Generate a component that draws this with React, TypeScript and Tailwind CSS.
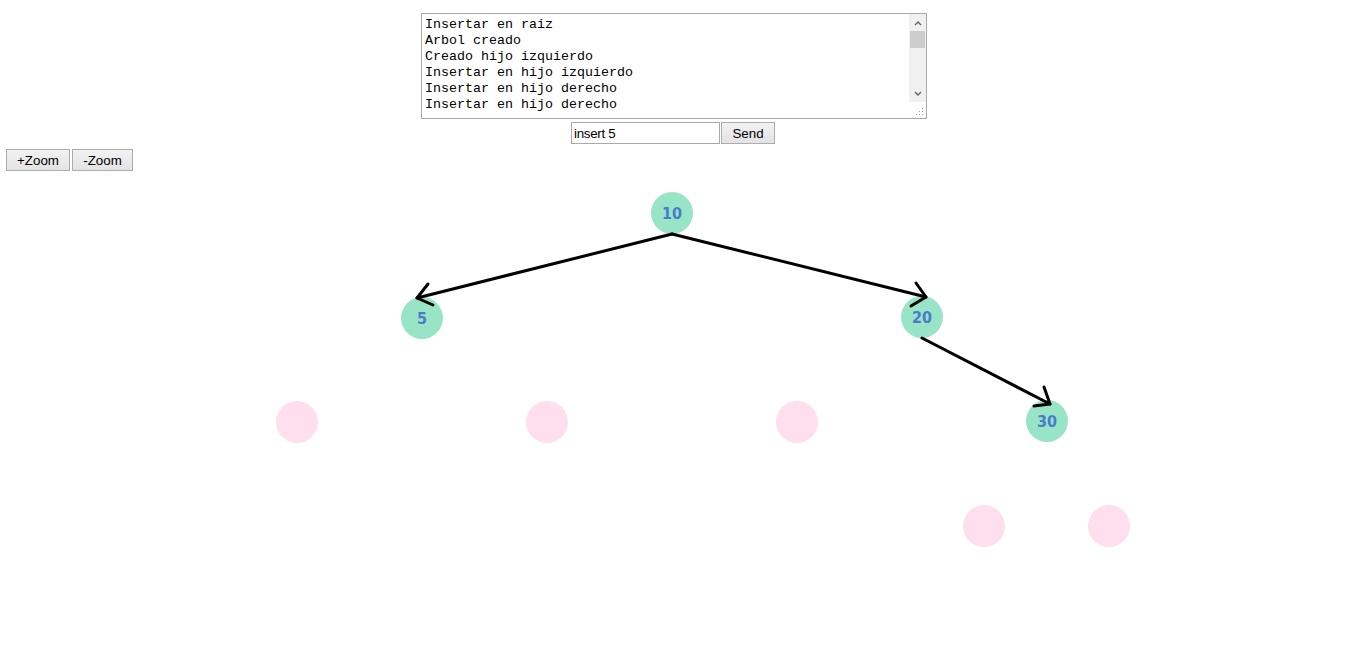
import React from "react";

const logLines = [
  "Insertar en raiz",
  "Arbol creado",
  "Creado hijo izquierdo",
  "Insertar en hijo izquierdo",
  "Insertar en hijo derecho",
  "Insertar en hijo derecho",
];

// tree nodes, page coords with the canvas top at y=171
const TOP = 171;
const nodes = [
  { x: 672, y: 213, label: "10" },
  { x: 422, y: 318, label: "5" },
  { x: 922, y: 317, label: "20" },
  { x: 1047, y: 421, label: "30" },
];
const empties = [
  { x: 297, y: 422 },
  { x: 547, y: 422 },
  { x: 797, y: 422 },
  { x: 984, y: 526 },
  { x: 1109, y: 526 },
];
const edges = [
  { x1: 672, y1: 234, x2: 417, y2: 298, a: [428, 284], b: [433, 305] },
  { x1: 672, y1: 234, x2: 926, y2: 297, a: [916, 283], b: [911, 306] },
  { x1: 922, y1: 338, x2: 1050, y2: 404, a: [1044, 387], b: [1034, 406] },
];

const btn =
  "h-[22px] pt-[2px] border border-[#acacac] bg-gradient-to-b from-[#f2f2f2] to-[#e3e3e3] text-[13.33px] text-black font-['Liberation_Sans',Arial,sans-serif] leading-none";

const App: React.FC = () => {
  return (
    <div className="w-full h-[647px] bg-white overflow-hidden">
      {/* Log box */}
      <div className="flex justify-center pt-[13px] pl-[2px]">
        <div className="relative w-[506px] h-[106px] border border-[#a9a9a9] bg-white">
          <div className="pl-[3px] pt-[3px] font-['Liberation_Mono','Courier_New',monospace] text-[13.33px] leading-[16px] text-black whitespace-pre">
            {logLines.map((l, i) => (
              <div key={i}>{l}</div>
            ))}
          </div>
          {/* scrollbar */}
          <div className="absolute right-0 top-0 w-[17px] h-[88px] bg-[#f0f0f0] flex flex-col items-center">
            <div className="h-[17px] flex items-center justify-center">
              <svg width="8" height="6" viewBox="0 0 8 6">
                <path d="M1 5 L4 2 L7 5" stroke="#606060" strokeWidth="1.3" fill="none" />
              </svg>
            </div>
            <div className="w-[15px] h-[17px] bg-[#cdcdcd]" />
            <div className="flex-1" />
            <div className="h-[17px] flex items-center justify-center">
              <svg width="8" height="6" viewBox="0 0 8 6">
                <path d="M1 1 L4 4 L7 1" stroke="#606060" strokeWidth="1.3" fill="none" />
              </svg>
            </div>
          </div>
          {/* resize grip */}
          <svg className="absolute right-[2px] bottom-[2px]" width="9" height="9" viewBox="0 0 9 9">
            <rect x="7" y="1" width="1" height="1" fill="#a0a0a0" />
            <rect x="4" y="4" width="1" height="1" fill="#a0a0a0" />
            <rect x="7" y="4" width="1" height="1" fill="#a0a0a0" />
            <rect x="1" y="7" width="1" height="1" fill="#a0a0a0" />
            <rect x="4" y="7" width="1" height="1" fill="#a0a0a0" />
            <rect x="7" y="7" width="1" height="1" fill="#a0a0a0" />
          </svg>
        </div>
      </div>

      {/* Command input */}
      <div className="flex justify-center mt-[3px]">
        <input
          type="text"
          defaultValue="insert 5"
          className="w-[149px] h-[22px] border border-[#a9a9a9] px-[2px] pt-[1px] text-[13.33px] text-black font-['Liberation_Sans',Arial,sans-serif] tracking-[-0.3px] outline-none"
        />
        <button className={`${btn} w-[54px] ml-[1px]`}>Send</button>
      </div>

      {/* Zoom buttons */}
      <div className="flex gap-[2px] pl-[6px] mt-[5px]">
        <button className={`${btn} w-[64px]`}>+Zoom</button>
        <button className={`${btn} w-[61px]`}>-Zoom</button>
      </div>

      {/* Tree canvas */}
      <svg width="1346" height="476" viewBox={`0 ${TOP} 1346 476`} className="block">
        {empties.map((n, i) => (
          <circle key={i} cx={n.x} cy={n.y} r="21" fill="#ffdfee" />
        ))}
        {nodes.map((n, i) => (
          <g key={i}>
            <circle cx={n.x} cy={n.y} r="21" fill="#98e4c6" />
            <text
              x={n.x}
              y={n.y + 6}
              textAnchor="middle"
              fontFamily="'DejaVu Sans Condensed', 'DejaVu Sans', Verdana, sans-serif"
              fontWeight="bold"
              fontSize="16"
              fill="#4a7ccb"
            >
              {n.label}
            </text>
          </g>
        ))}
        {edges.map((e, i) => (
          <g key={i} stroke="#000" strokeWidth="3" fill="none" strokeLinecap="round" strokeLinejoin="round">
            <line x1={e.x1} y1={e.y1} x2={e.x2} y2={e.y2} />
            <polyline points={`${e.a[0]},${e.a[1]} ${e.x2},${e.y2} ${e.b[0]},${e.b[1]}`} />
          </g>
        ))}
      </svg>
    </div>
  );
};

export default App;
